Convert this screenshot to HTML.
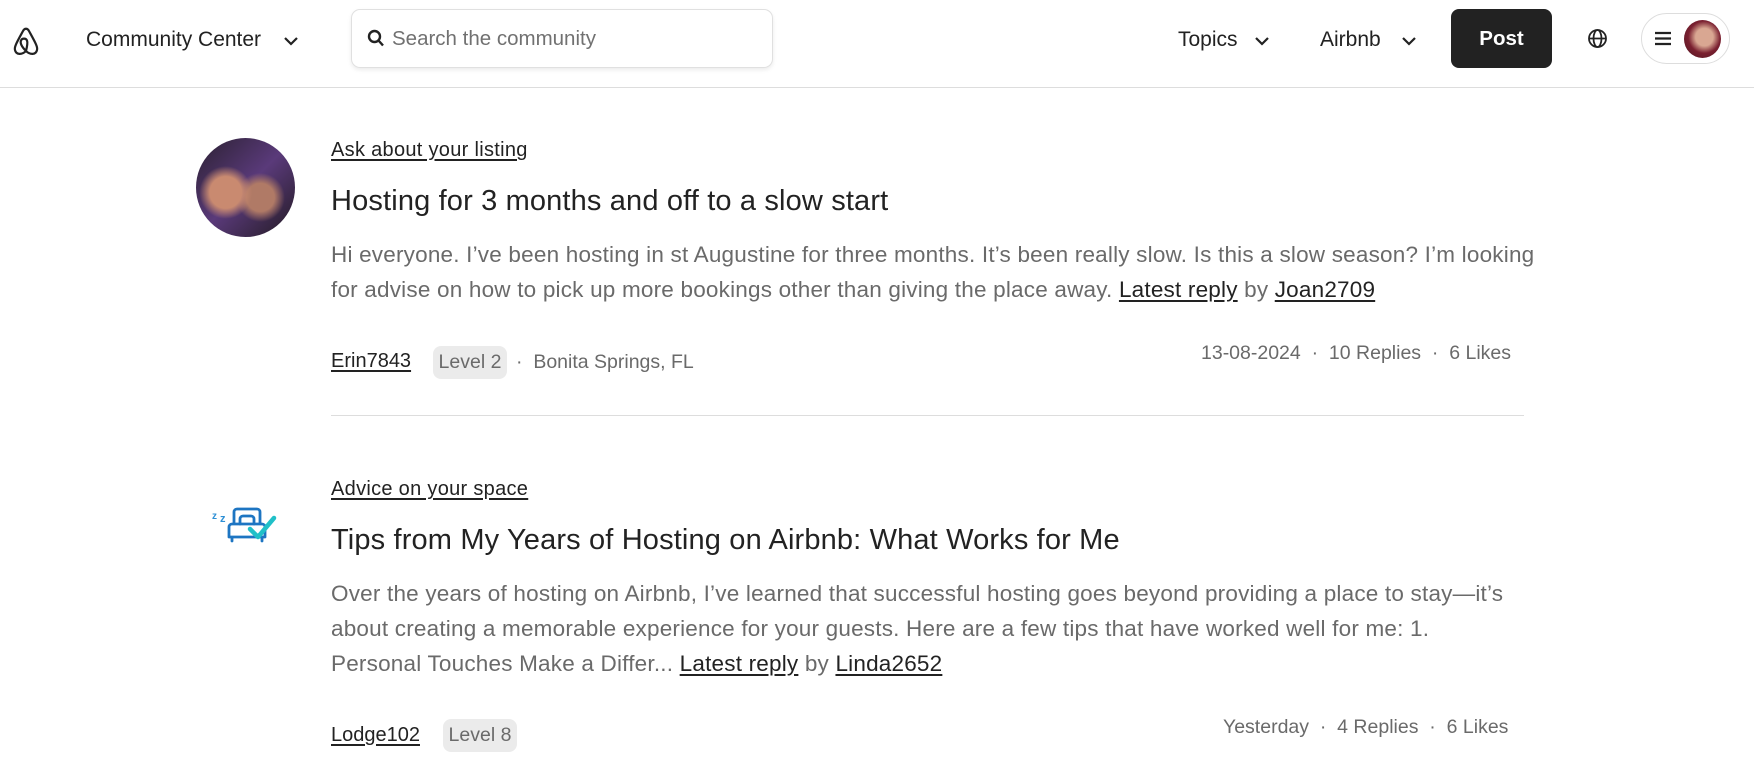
<!DOCTYPE html>
<html><head><meta charset="utf-8">
<style>
*{margin:0;padding:0;box-sizing:border-box}
body{width:1754px;height:780px;overflow:hidden;background:#fff;font-family:"Liberation Sans",sans-serif;color:#222;position:relative}
.a{position:absolute;white-space:nowrap}
.hdr{position:absolute;left:0;top:0;width:1754px;height:88px;border-bottom:1px solid #ddd}
.nav{font-size:21px;color:#222}
.u{text-decoration:underline;text-underline-offset:3px}
.cat{font-size:20px;color:#222;letter-spacing:.3px}
.ttl{font-size:29px;color:#222;letter-spacing:.15px}
.body{font-size:22.5px;color:#6a6a6a;line-height:35px;width:1260px;white-space:nowrap;letter-spacing:.2px}
.body a{color:#222;text-decoration:underline;text-underline-offset:3px}
.meta{font-size:19.5px;color:#6a6a6a}
.badge{position:absolute;background:#ebebeb;border-radius:8px;font-size:19.5px;color:#6a6a6a;text-align:center;line-height:33px;height:33px}
.user{font-size:20px;color:#222;text-decoration:underline;text-underline-offset:3px}
</style></head><body>
<div class="hdr"></div>
<svg class="a" style="left:12px;top:26px" width="28" height="30" viewBox="0 0 28 30" fill="none" stroke="#222" stroke-width="2.2"><path d="M14 25c-4 4-10 4-11-1-1-3 2-8 8-19 1.5-3 4.5-3 6 0 6 11 9 16 8 19-1 5-7 5-11 1zM14 25c-4-4-6-8-5-10.5s5-2.5 6 0 0 6.5-1 10.5"/></svg>
<div class="a nav" style="left:86px;top:28px">Community Center</div>
<svg class="a" style="left:283px;top:35px" width="16" height="12" viewBox="0 0 16 12" fill="none" stroke="#222" stroke-width="2.2"><path d="M2 3l6 6 6-6"/></svg>
<div class="a" style="left:351px;top:9px;width:422px;height:59px;border:1px solid #e0e0e0;border-radius:9px;box-shadow:0 2px 4px rgba(0,0,0,.08)"></div>
<svg class="a" style="left:367px;top:29px" width="18" height="19" viewBox="0 0 18 19" fill="none" stroke="#222" stroke-width="2.4"><circle cx="7.5" cy="7.5" r="5.5"/><path d="M11.5 11.5l4.5 5"/></svg>
<div class="a" style="left:392px;top:27px;font-size:20.5px;color:#717171">Search the community</div>
<div class="a nav" style="left:1178px;top:28px">Topics</div>
<svg class="a" style="left:1254px;top:35px" width="16" height="12" viewBox="0 0 16 12" fill="none" stroke="#222" stroke-width="2.2"><path d="M2 3l6 6 6-6"/></svg>
<div class="a nav" style="left:1320px;top:28px">Airbnb</div>
<svg class="a" style="left:1401px;top:35px" width="16" height="12" viewBox="0 0 16 12" fill="none" stroke="#222" stroke-width="2.2"><path d="M2 3l6 6 6-6"/></svg>
<div class="a" style="left:1451px;top:9px;width:101px;height:59px;background:#222;border-radius:8px;color:#fff;font-size:20.5px;font-weight:bold;text-align:center;line-height:59px">Post</div>
<svg class="a" style="left:1587px;top:28px" width="21" height="21" viewBox="0 0 21 21" fill="none" stroke="#222" stroke-width="1.8"><circle cx="10.5" cy="10.5" r="8.5"/><ellipse cx="10.5" cy="10.5" rx="4" ry="8.5"/><path d="M2 10.5h17"/></svg>
<div class="a" style="left:1641px;top:13px;width:89px;height:51px;border:1px solid #ddd;border-radius:26px"></div>
<svg class="a" style="left:1654px;top:31px" width="18" height="15" viewBox="0 0 18 15" stroke="#222" stroke-width="2.2"><path d="M1 2h16M1 7.5h16M1 13h16"/></svg>
<div class="a" style="left:1684px;top:20px;width:37px;height:38px;border-radius:50%;background:radial-gradient(circle at 55% 45%,#d9a792 0 30%,#7a2030 55%,#4a1420 100%)"></div>

<div class="a" style="left:196px;top:138px;width:99px;height:99px;border-radius:50%;background:radial-gradient(circle at 30% 55%,#c98a70 0 18%,transparent 30%),radial-gradient(circle at 65% 60%,#b07a66 0 16%,transparent 28%),linear-gradient(135deg,#2a2030,#5a3a7a 50%,#221a22)"></div>
<div class="a cat u" style="left:331px;top:139px">Ask about your listing</div>
<div class="a ttl" style="left:331px;top:185px">Hosting for 3 months and off to a slow start</div>
<div class="a body" style="left:331px;top:237px">Hi everyone. I’ve been hosting in st Augustine for three months. It’s been really slow. Is this a slow season? I’m looking<br>for advise on how to pick up more bookings other than giving the place away. <a>Latest reply</a> by <a>Joan2709</a></div>
<div class="a user" style="left:331px;top:350px">Erin7843</div>
<div class="badge" style="left:433px;top:346px;width:74px">Level 2</div>
<div class="a meta" style="left:516px;top:351px">·&nbsp; Bonita Springs, FL</div>
<div class="a meta" style="left:1201px;top:342px;">13-08-2024 &nbsp;·&nbsp; 10 Replies &nbsp;·&nbsp; 6 Likes</div>
<div class="a" style="left:331px;top:415px;width:1193px;height:1px;background:#ddd"></div>

<svg class="a" style="left:212px;top:505px" width="68" height="40" viewBox="0 0 68 40" fill="none" stroke-linecap="round" stroke-linejoin="round">
<text x="0" y="14" font-size="10" font-family="Liberation Sans" font-weight="bold" fill="#2d8fd5">z</text>
<text x="8" y="17" font-size="11" font-family="Liberation Sans" font-weight="bold" fill="#2d8fd5">z</text>
<g stroke="#1d75c2" stroke-width="2.8"><path d="M22 18V7a3 3 0 013-3h20a3 3 0 013 3v11"/><path d="M28 19v-5a3 3 0 013-3h8a3 3 0 013 3v5"/><path d="M17 32V22a3 3 0 013-3h30a3 3 0 013 3v10zM20 32v4M50 32v4"/></g>
<path d="M38 24l8 8 16-19" stroke="#20c0c8" stroke-width="4.5"/></svg>
<div class="a cat u" style="left:331px;top:478px">Advice on your space</div>
<div class="a ttl" style="left:331px;top:524px">Tips from My Years of Hosting on Airbnb: What Works for Me</div>
<div class="a body" style="left:331px;top:576px">Over the years of hosting on Airbnb, I’ve learned that successful hosting goes beyond providing a place to stay—it’s<br>about creating a memorable experience for your guests. Here are a few tips that have worked well for me: 1.<br>Personal Touches Make a Differ... <a>Latest reply</a> by <a>Linda2652</a></div>
<div class="a user" style="left:331px;top:724px">Lodge102</div>
<div class="badge" style="left:443px;top:719px;width:74px">Level 8</div>
<div class="a meta" style="left:1223px;top:716px">Yesterday &nbsp;·&nbsp; 4 Replies &nbsp;·&nbsp; 6 Likes</div>
</body></html>
